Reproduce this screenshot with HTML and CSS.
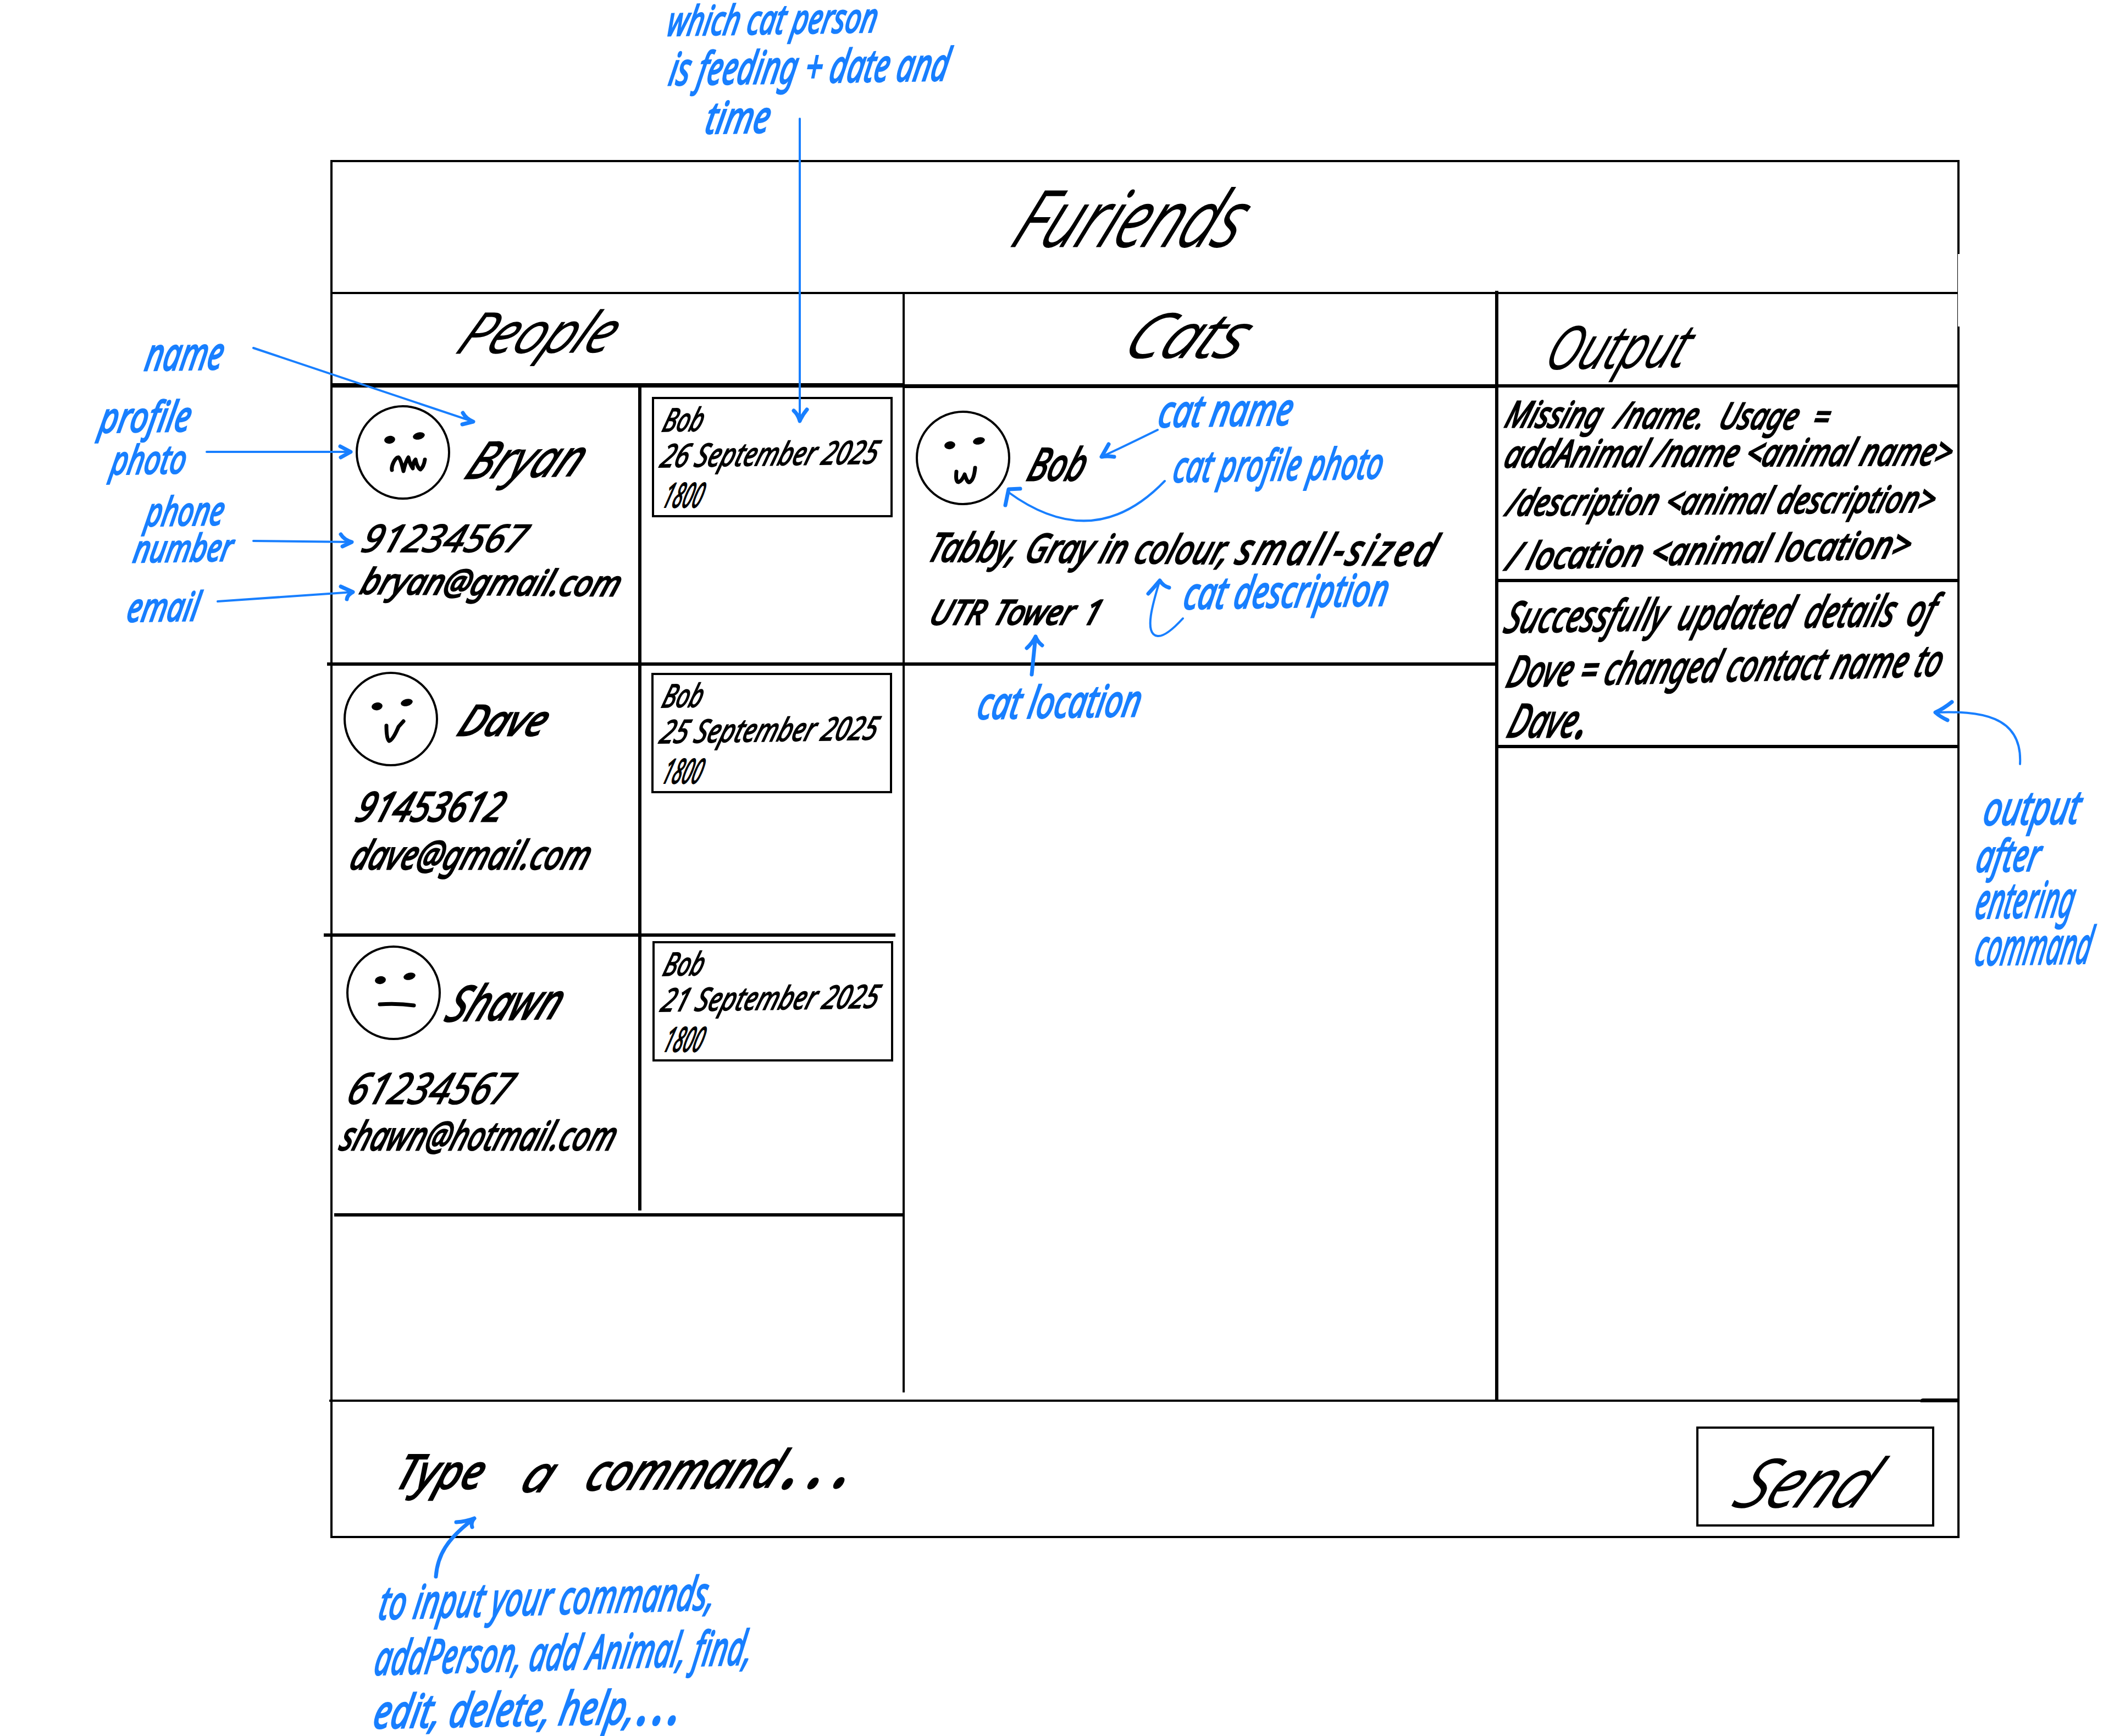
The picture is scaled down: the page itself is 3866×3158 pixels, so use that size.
FILE: index.html
```html
<!DOCTYPE html>
<html lang="en">
<head>
<meta charset="utf-8">
<title>Furiends</title>
<link rel="stylesheet" href="styles.css">
</head>
<body>
<div class="canvas">
<main class="board">
  <header class="app-header"><h1 class="ink app-title">Furiends</h1></header>
  <div class="columns">
    <section class="people">
      <h2 class="people-head"><span class="ink people-title">People</span></h2>
      <article class="person bryan">
        <div class="contact">
          <div class="identity">
            <svg class="face" viewBox="-88 -88 176 176"><circle r="84"/><ellipse class="eye" cx="-24" cy="-23" rx="10" ry="7" transform="rotate(-10 -24 -23)"/><ellipse class="eye" cx="29" cy="-30" rx="11" ry="6.5" transform="rotate(-14 29 -30)"/><path d="M-20 32Q-21 26-17 18Q-12 8-8 9Q-4 12 1 34Q5 16 10 9Q12 20 18 29Q18 18 23 13Q26 28 32 31Q38 26 40 13"/></svg>
            <h3 class="ink name">Bryan</h3>
          </div>
          <p class="ink phone">91234567</p>
          <p class="ink email">bryan@gmail.com</p>
        </div>
        <div class="schedule"><div class="feeding"><p class="ink fed">Bob</p><p class="ink when">26 September 2025</p><p class="ink hour">1800</p></div></div>
      </article>
      <article class="person dave">
        <div class="contact">
          <div class="identity">
            <svg class="face" viewBox="-88 -88 176 176"><circle r="84"/><ellipse class="eye" cx="-25" cy="-23" rx="10" ry="7" transform="rotate(-10 -25 -23)"/><ellipse class="eye" cx="29" cy="-30" rx="11" ry="6.5" transform="rotate(-14 29 -30)"/><path d="M-8 12Q-8 36-3 40Q4 38 14 14L23 4"/></svg>
            <h3 class="ink name">Dave</h3>
          </div>
          <p class="ink phone">91453612</p>
          <p class="ink email">dave@gmail.com</p>
        </div>
        <div class="schedule"><div class="feeding"><p class="ink fed">Bob</p><p class="ink when">25 September 2025</p><p class="ink hour">1800</p></div></div>
      </article>
      <article class="person shawn">
        <div class="contact">
          <div class="identity">
            <svg class="face" viewBox="-88 -88 176 176"><circle r="84"/><ellipse class="eye" cx="-24" cy="-23" rx="10" ry="7" transform="rotate(-10 -24 -23)"/><ellipse class="eye" cx="29" cy="-30" rx="11" ry="6.5" transform="rotate(-14 29 -30)"/><path d="M-25 21Q8 19 37 23"/></svg>
            <h3 class="ink name">Shawn</h3>
          </div>
          <p class="ink phone">61234567</p>
          <p class="ink email">shawn@hotmail.com</p>
        </div>
        <div class="schedule"><div class="feeding"><p class="ink fed">Bob</p><p class="ink when">21 September 2025</p><p class="ink hour">1800</p></div></div>
      </article>
    </section>
    <section class="cats">
      <h2 class="cats-head"><span class="ink cats-title">Cats</span></h2>
      <article class="cat">
        <div class="identity">
          <svg class="face" viewBox="-88 -88 176 176"><circle r="84"/><ellipse class="eye" cx="-24" cy="-23" rx="10" ry="7" transform="rotate(-10 -24 -23)"/><ellipse class="eye" cx="29" cy="-31" rx="11" ry="6.5" transform="rotate(-14 29 -31)"/><path d="M-12 25Q-14 44-8 44Q-2 42 3 30Q8 46 12 44Q20 40 22 18"/></svg>
          <h3 class="ink cat-name">Bob</h3>
        </div>
        <p class="ink looks">Tabby, Gray in colour, <span class="wide">small-sized</span></p>
        <p class="ink place">UTR Tower 1</p>
      </article>
    </section>
    <section class="output">
      <h2 class="output-head"><span class="ink output-title">Output</span></h2>
      <div class="message failure">
        <p class="ink f1">Missing /name. Usage =</p>
        <p class="ink f2">addAnimal /name &lt;animal name&gt;</p>
        <p class="ink f3">/description &lt;animal description&gt;</p>
        <p class="ink f4">/ location &lt;animal location&gt;</p>
      </div>
      <div class="message success">
        <p class="ink s1">Successfully updated details of</p>
        <p class="ink s2">Dove = changed contact name to</p>
        <p class="ink s3">Dave<span class="stop">.</span></p>
      </div>
    </section>
  </div>
  <footer class="command-bar">
    <span class="ink c1">Type</span><span class="ink c2">a</span><span class="ink c3">command<span class="dots">...</span></span>
    <div class="send"><span class="ink send-label">Send</span></div>
  </footer>
</main>
<svg class="arrows" viewBox="0 0 3866 3158">
  <path d="M461 633L861 767M376 822H638M461 984L640 986M396 1094L642 1077M1455 216V767M2106 782Q2045 812 2004 831M2119 875Q1990 1009 1834 895M2152 1125C2130 1149 2115 1158 2106 1157C2080 1154 2098 1095 2110 1056M3675 1390C3680 1300 3600 1293 3520 1296"/>
  <path class="bold" d="M842 751Q848 762 861 767L841 772M619 812L638 822L620 832M620 972Q626 982 640 986L623 994M620 1067L642 1077Q632 1082 631 1090M1444 747Q1452 754 1455 766Q1459 756 1468 745M2017 808L2004 831Q2014 829 2027 831M1856 889L1835 890L1829 919M2089 1080Q2100 1068 2110 1056Q2116 1066 2127 1069M1877 1227L1884 1158M1868 1179Q1878 1170 1884 1158Q1888 1168 1896 1174M3551 1277Q3536 1289 3521 1296Q3530 1304 3543 1310M793 2868C796 2830 812 2800 863 2762M830 2769Q848 2768 863 2762Q856 2770 859 2778"/>
</svg>
<p class="ink note n-which">which cat person</p>
<p class="ink note n-feeding">is feeding + date and</p>
<p class="ink note n-time">time</p>
<p class="ink note n-name">name</p>
<p class="ink note n-profile">profile</p>
<p class="ink note n-photo">photo</p>
<p class="ink note n-phone">phone</p>
<p class="ink note n-number">number</p>
<p class="ink note n-email">email</p>
<p class="ink note n-catname">cat name</p>
<p class="ink note n-catphoto">cat profile photo</p>
<p class="ink note n-catdesc">cat description</p>
<p class="ink note n-catloc">cat location</p>
<p class="ink note n-output">output</p>
<p class="ink note n-after">after</p>
<p class="ink note n-entering">entering</p>
<p class="ink note n-command">command</p>
<p class="ink note n-input">to input your commands,</p>
<p class="ink note n-add">addPerson, add Animal, find,</p>
<p class="ink note n-edit">edit, delete, help,<span class="etc">...</span></p>
</div>
</body>
</html>
```
FILE: styles.css
```css
* { box-sizing: border-box; margin: 0; padding: 0; }
body { background: #fff; color: #000; font-family: "Noto Sans", sans-serif; font-style: italic; }
.canvas { position: relative; width: 3866px; height: 3158px; padding: 291px 0 0 601px; overflow: hidden; }

/* Handwritten line: slanted (--s), narrowed (--k) and tilted (--r) about the start of its baseline */
.ink {
  --k: 1; --r: 0deg; --s: -18deg;
  display: block; width: max-content; white-space: pre; font-weight: 400; line-height: 1;
  -webkit-text-stroke: 3px currentColor;
  transform-origin: 0 88.8%;
  transform: rotate(var(--r)) skewX(var(--s)) scaleX(var(--k));
}

.board { position: relative; width: 2964px; height: 2507px; border: 4px solid #000; }
/* The right edge is drawn lighter where two strokes meet */
.board::after { content: ""; position: absolute; right: -4px; top: 167px; width: 3px; height: 132px; background: #fff; }
.app-header { height: 240px; padding: 29px 0 0 1230px; border-bottom: 4px solid #000; }
.app-title, .people-title, .cats-title, .output-title, .send-label { font-weight: 300; }
.app-title { --k: .785; --s: -24deg; font-size: 140px; }

.columns { display: grid; grid-template-columns: 1041px 1074px 841px; height: 2011px; }
.people { height: 1998px; border-right: 4px solid #000; }
.people-head { height: 170px; padding: 18px 0 0 222px; border-bottom: 8px solid #000; }
.people-title { --k: .945; --s: -28deg; --r: -.5deg; font-size: 100px; }
.cats-head { height: 171px; padding: 17px 0 0 392px; border-bottom: 7px solid #000; }
.cats-title { --k: 1.02; --s: -28deg; font-size: 110px; }
.output { margin-top: -6px; padding-top: 6px; border-left: 6px solid #000; }
.output-head { height: 170px; padding: 43px 0 0 80px; border-bottom: 6px solid #000; }
.output-title { --k: .79; --s: -22deg; --r: -1deg; font-size: 105px; }

.person { display: grid; grid-template-columns: minmax(0, 1fr) 475px; border-bottom: 6px solid #000; }
.bryan { height: 506px; margin-left: -10px; padding-left: 10px; }
.dave { height: 493px; margin: 0 13px 0 -16px; padding-left: 16px; grid-template-columns: minmax(0, 1fr) 462px; }
.shawn { height: 509px; margin-left: 3px; }
.contact { border-right: 6px solid #000; }
.shawn .contact { margin: 0 0 5px -3px; }
.identity { display: flex; align-items: flex-start; height: 176px; }
.face { flex: none; width: 176px; height: 176px; fill: none; stroke: #000; stroke-width: 4; stroke-linecap: round; stroke-linejoin: round; }
.face path { stroke-width: 7; }
.face .eye { fill: #000; stroke: none; }

.bryan .contact { padding-top: 30px; }
.bryan .identity { margin-left: 40px; }
.bryan .name { --k: .86; --s: -28deg; --r: -1.5deg; margin: 55px 0 0 20px; font-size: 92px; -webkit-text-stroke-width: 2px; }
.bryan .phone { --k: .975; margin: 32px 0 0 49px; font-size: 69px; -webkit-text-stroke-width: 2px; }
.bryan .email { --k: .905; --r: .5deg; margin: 12px 0 0 47px; font-size: 64px; }
.dave .contact { padding-top: 9px; }
.dave .identity { margin-left: 18px; }
.dave .name { --k: .92; --s: -24deg; margin: 50px 0 0 29px; font-size: 77px; }
.dave .phone { --k: .815; margin: 33px 0 0 38px; font-size: 74px; }
.dave .email { --k: .788; margin: 14px 0 0 28px; font-size: 72px; }
.shawn .contact { padding-top: 14px; }
.shawn .identity { margin-left: 23px; }
.shawn .name { --k: .79; --s: -24deg; --r: -1.5deg; margin: 62px 0 0 2px; font-size: 88px; }
.shawn .phone { --k: .865; margin: 45px 0 0 22px; font-size: 78px; -webkit-text-stroke-width: 2px; }
.shawn .email { --k: .744; margin: 11px 0 0 10px; font-size: 72px; }

.schedule { padding: 17px 0 0 19px; }
.dave .schedule { padding: 13px 0 0 18px; }
.shawn .schedule { padding: 8px 0 0 20px; }
.feeding { width: 438px; height: 219px; padding: 8px 0 0 8px; border: 4px solid #000; }
.feeding .ink { -webkit-text-stroke-width: 2px; }
.fed { --k: .72; --r: -1deg; margin-left: 4px; font-size: 58px; }
.when { --k: .792; --r: -1deg; margin-top: 7px; font-size: 58px; }
.hour { --k: .52; margin: 11px 0 0 4px; font-size: 62px; }

.cat { height: 505px; padding-top: 39px; border-bottom: 6px solid #000; }
.cat .identity { margin-left: 18px; }
.cat-name { --k: .72; margin: 56px 0 0 25px; font-size: 82px; }
.looks { --k: .80; --r: .5deg; margin: 36px 0 0 38px; font-size: 72px; }
.wide { font-size: 78px; line-height: 0; letter-spacing: 6.5px; }
.place { --k: .9; margin: 52px 0 0 42px; font-size: 62px; word-spacing: 4px; }

.message { border-bottom: 6px solid #000; }
.failure { height: 354px; padding: 13px 0 0 7px; }
.success { height: 302px; margin-right: -4px; padding: 23px 0 0 7px; }
.f1 { --k: .775; --r: .4deg; margin-left: 2px; font-size: 66px; word-spacing: 19px; }
.f2 { --k: .783; --r: -.3deg; margin-top: 6px; font-size: 68px; }
.f3 { --k: .785; --r: -.5deg; margin: 21px 0 0 5px; font-size: 66px; }
.f4 { --k: .86; --r: -1.8deg; margin: 32px 0 0 5px; font-size: 68px; }
.s1 { --k: .715; --r: -1deg; font-size: 78px; word-spacing: 12px; }
.s2 { --k: .695; --r: -1.5deg; margin: 21px 0 0 4px; font-size: 78px; }
.s3 { --k: .669; margin: 8px 0 0 5px; font-size: 84px; }
.stop { margin-left: 6px; -webkit-text-stroke-width: 7px; }

.command-bar { position: relative; display: flex; align-items: flex-start; height: 248px; margin-left: -6px; padding-left: 116px; border-top: 4px solid #000; }
/* Doubled stroke at the end of the rule */
.command-bar::before { content: ""; position: absolute; right: 0; top: -6px; width: 68px; height: 7px; background: #000; border-radius: 12px 0 0 4px; }
.c1 { --k: .9; width: 227px; margin-top: 82px; font-size: 86px; }
.c2 { --s: -24deg; --k: 1; width: 117px; margin-top: 83px; font-size: 92px; -webkit-text-stroke-width: 2px; }
.c3 { --s: -24deg; --r: -1deg; --k: .845; width: 480px; margin-top: 80px; font-size: 92px; }
.dots { margin-left: 18px; letter-spacing: 32px; -webkit-text-stroke-width: 9px; }
.send { width: 433px; height: 182px; margin: 45px 42px 0 auto; padding: 36px 0 0 58px; border: 4px solid #000; }
.send-label { --k: .93; --s: -28deg; font-size: 120px; }

/* Annotations drawn over the board */
.arrows { position: absolute; inset: 0; width: 3866px; height: 3158px; fill: none; stroke: #187fff; stroke-width: 4; stroke-linecap: round; stroke-linejoin: round; }
.arrows .bold { stroke-width: 7; }
.note { --s: -12deg; --r: -1deg; position: absolute; color: #187fff; }
.n-which { --k: .685; left: 1211px; top: 0; font-size: 74px; }
.n-feeding { --k: .665; left: 1214px; top: 82px; font-size: 82px; }
.n-time { --k: .74; left: 1280px; top: 172px; font-size: 80px; }
.n-name { --k: .68; left: 261px; top: 601px; font-size: 82px; }
.n-profile { --k: .76; left: 178px; top: 720px; font-size: 76px; }
.n-photo { --k: .72; left: 199px; top: 799px; font-size: 72px; }
.n-phone { --k: .7; left: 262px; top: 893px; font-size: 72px; }
.n-number { --k: .75; left: 240px; top: 963px; font-size: 68px; }
.n-email { --k: .735; left: 228px; top: 1067px; font-size: 72px; }
.n-catname { --k: .735; left: 2104px; top: 706px; font-size: 80px; }
.n-catphoto { --k: .665; left: 2131px; top: 808px; font-size: 78px; }
.n-catdesc { --k: .71; left: 2150px; top: 1037px; font-size: 80px; }
.n-catloc { --k: .715; left: 1775px; top: 1237px; font-size: 80px; }
.n-output { --k: .7; left: 3605px; top: 1427px; font-size: 84px; }
.n-after { --k: .68; left: 3592px; top: 1515px; font-size: 80px; }
.n-entering { --k: .535; left: 3590px; top: 1591px; font-size: 90px; }
.n-command { --k: .51; left: 3589px; top: 1675px; font-size: 92px; }
.n-input { --k: .65; --r: -1.7deg; left: 686px; top: 2872px; font-size: 84px; }
.n-add { --k: .62; --r: -1.6deg; left: 678px; top: 2971px; font-size: 86px; }
.n-edit { --k: .75; left: 676px; top: 3070px; font-size: 84px; }
.etc { margin-left: 12px; letter-spacing: 16px; -webkit-text-stroke-width: 8px; }
```
